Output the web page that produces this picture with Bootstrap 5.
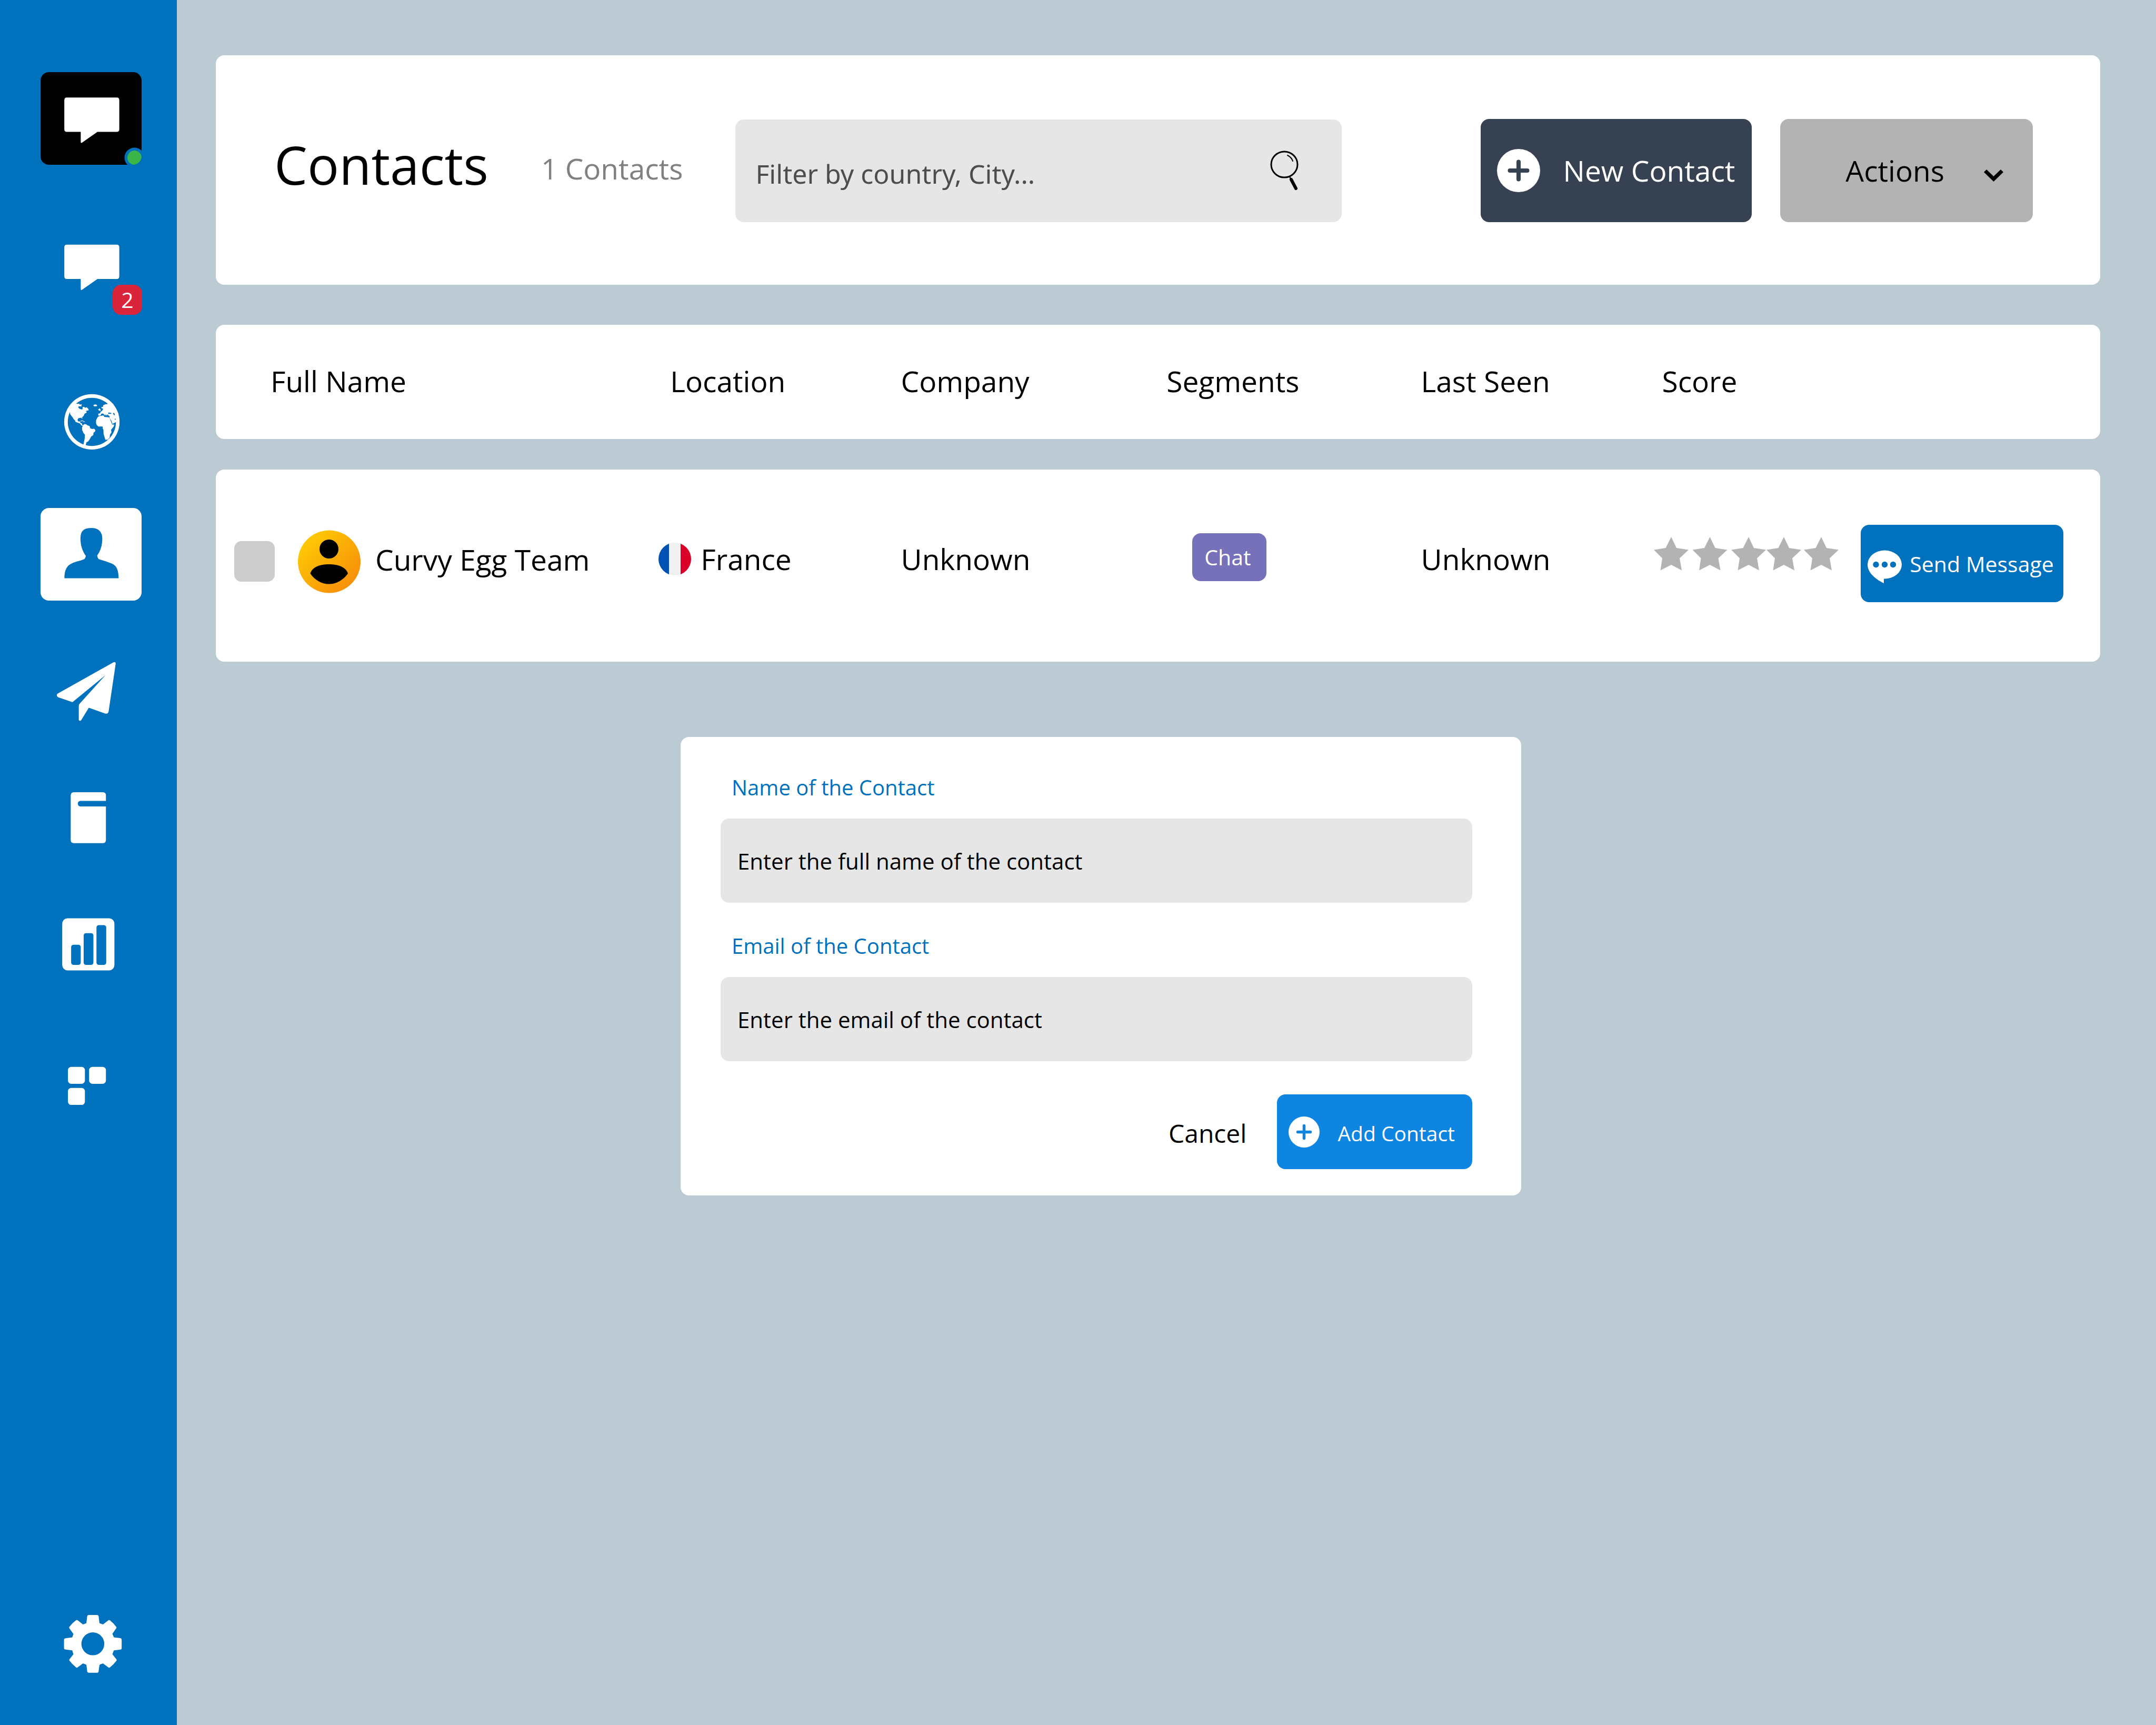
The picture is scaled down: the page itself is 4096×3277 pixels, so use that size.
<!DOCTYPE html>
<html lang="en">
<head>
<meta charset="utf-8">
<meta name="viewport" content="width=device-width, initial-scale=1">
<title>Contacts</title>
<link href="https://cdn.jsdelivr.net/npm/bootstrap@5.3.0/dist/css/bootstrap.min.css" rel="stylesheet">
<style>
  :root { --brand: #0071bc; --radius: 16px; }
  body { font-family: "Open Sans", "Noto Sans", sans-serif; font-size: 55px; line-height: 76px; color: #000; background: #bccad3; }
  svg { display: block; flex: none; }

  /* Sidebar */
  .side-rail { width: 336px; flex: none; background: var(--brand); padding: 137px 67px 66px 77px; }
  .rail-main { row-gap: 100px; }
  .rail-tools { row-gap: 64px; margin-top: 84px; }
  .rail-link { display: block; width: 192px; height: 176px; color: #fff; border-radius: var(--radius); }
  .rail-link svg { width: 192px; height: 176px; overflow: visible; fill: currentColor; }
  .rail-brand { background: #000; overflow: hidden; }
  .rail-link.current { background: #fff; color: var(--brand); }
  .unread-count { position: absolute; left: 137px; top: 128px; width: 56px; height: 57px; border-radius: var(--radius); background: #d9243a; color: #fff; font-size: 41px; line-height: 56px; text-align: center; }

  /* Page */
  .page-body { padding: 105px 106px 66px 74px; }
  .panel { background: #fff; border-radius: var(--radius); }
  .page-head { padding: 121px 128px 119px 111px; column-gap: 100px; }
  .page-title { font-size: 100px; line-height: 136px; font-weight: 400; padding-bottom: 24px; }
  .contact-count { color: #808080; padding-bottom: 8px; }
  .search-box { flex: 0 1 1152px; height: 195px; background: #e6e6e6; border-radius: var(--radius); padding-right: 82px; }
  .search-box input { font-family: "Noto Sans", sans-serif; font-size: 50px; line-height: 76px; padding: 12px 0 0 38px; background: none; border: 0; border-radius: var(--radius); height: 100%; color: #4d4d4d; }
  .search-box input::placeholder { color: #4d4d4d; opacity: 1; }
  .head-actions { column-gap: 54px; }
  .btn { --bs-btn-border-width: 0; --bs-btn-border-radius: 16px; display: inline-flex; align-items: center; padding: 0; font-size: inherit; line-height: inherit; white-space: nowrap; }
  .btn-new { --bs-btn-bg: #364152; --bs-btn-color: #fff; height: 196px; padding: 0 32px 0 31px; column-gap: 44px; }
  .btn-actions { --bs-btn-bg: #b3b3b3; --bs-btn-color: #000; height: 196px; padding: 0 56px 0 124px; column-gap: 75px; }

  /* Contacts table: every row is a panel of its own */
  .contact-table { table-layout: fixed; width: 100%; border-collapse: separate; border-spacing: 0 58px; margin-top: 18px; }
  .contact-table th, .contact-table td { background: #fff; padding: 0 0 0 2px; vertical-align: middle; }
  .contact-table th { height: 217px; font-weight: 400; padding-bottom: 4px; }
  .contact-table td { height: 365px; padding-bottom: 26px; }
  .contact-table tr > :first-child { border-radius: var(--radius) 0 0 var(--radius); }
  .contact-table tr > :last-child { border-radius: 0 var(--radius) var(--radius) 0; }
  .contact-table th.col-name { padding-left: 104px; }
  .contact-table th.col-place { padding-left: 22px; }
  .contact-table th.col-score { padding-left: 16px; }
  .contact-table td.cell-name { padding: 0 0 16px 35px; }
  .contact-table td.cell-place { padding-left: 0; }
  .contact-table td.cell-segment { padding: 0 0 32px 51px; }
  .contact-table td.cell-score { padding: 0 0 46px; }
  .contact-table td.cell-send { padding: 0 0 8px; }
  .row-check { width: 77px; height: 77px; flex: none; margin: 0 44px 0 0; background-color: #ccc; border: 0; border-radius: var(--radius); }
  .avatar { margin-right: 28px; }
  .cell-name label { padding-bottom: 8px; }
  .place { column-gap: 18px; }
  .segment-tag { display: inline-block; background: #7671b8; color: #fff; border-radius: var(--radius); font-size: 41px; line-height: 91px; padding: 0 29px 0 23px; vertical-align: middle; }
  .btn-send { --bs-btn-bg: var(--brand); --bs-btn-color: #fff; font-size: 41px; height: 147px; padding: 0 18px 0 13px; column-gap: 15px; }

  /* New contact form */
  .contact-form { width: 1597px; margin: 85px 0 0 883px; padding: 68px 93px 50px 76px; }
  .form-fields { row-gap: 54px; }
  .contact-form label { display: block; color: var(--brand); font-size: 40px; line-height: 56px; margin: 0 0 31px 21px; }
  .contact-form input { height: 160px; padding: 0 32px; border: 0; border-radius: var(--radius); background: #e6e6e6; font-size: 42px; color: #000; }
  .contact-form input::placeholder { color: #000; opacity: 1; }
  .form-foot { margin-top: 63px; column-gap: 58px; }
  .btn-cancel { --bs-btn-color: #000; font-size: 48px; padding-top: 6px; }
  .btn-add { --bs-btn-bg: #0d85e1; --bs-btn-color: #fff; font-size: 39px; height: 142px; padding: 0 33px 0 22px; column-gap: 34px; }
  .btn-add span { padding-top: 6px; }
</style>
</head>
<body class="d-flex min-vh-100">

<aside class="side-rail d-flex flex-column">
  <nav class="rail-main d-flex flex-column" aria-label="Main">
    <a class="rail-link rail-brand" href="#" aria-label="Profile">
      <svg viewBox="0 0 192 176" aria-hidden="true">
        <g transform="translate(-77 -60) scale(.26446 .35263)"><path d="M480 307H839Q857 307 857 322V478Q857 492 839 492H700L588 551Q580 554 580 546V492H480Q462 492 462 478V322Q462 307 480 307Z"/></g>
        <circle cx="178.500" cy="162.500" r="19" fill="#0071bc"/><path d="M178.500 162.500h19v19h-19z" fill="#0071bc"/><circle cx="178.500" cy="162.500" r="13.500" fill="#39b54a"/>
      </svg>
    </a>
    <a class="rail-link position-relative" href="#" aria-label="Conversations">
      <svg viewBox="0 0 192 176" aria-hidden="true"><g transform="translate(-77 -56.600) scale(.26446 .35263)"><path d="M480 307H839Q857 307 857 322V478Q857 492 839 492H700L588 551Q580 554 580 546V492H480Q462 492 462 478V322Q462 307 480 307Z"/></g></svg>
      <span class="unread-count">2</span>
    </a>
    <a class="rail-link" href="#" aria-label="Visitors">
      <svg viewBox="0 0 192 176" aria-hidden="true"><g transform="translate(-77 2.100) scale(.26446 .31342)">
        <path fill-rule="evenodd" d="M461 352a199 168 0 1 0 398 0a199 168 0 1 0-398 0ZM487 352a173 146 0 1 1 346 0a173 146 0 1 1-346 0Z"/>
        <path d="M492 262L540 246L548 241L560 243L570 241L572 248L588 245L584 253L587 258L566 258L561 264L572 273L590 277L594 272L593 262L605 261L612 267L622 264L632 270L638 281L628 284L614 287L624 291L620 297L608 302L600 317L591 323L591 335L584 327L565 329L557 338L560 348L570 350L576 348L576 357L588 361L590 370L597 374L592 376L583 372L575 362L543 352L538 342L530 336L522 325L508 310L503 303L502 290L485 320Z"/>
        <path d="M597 371L608 365L620 367L630 374L643 377L649 391L664 395L675 393L684 400L684 410L672 418L670 432L655 441L645 457L634 470L622 475L617 488L619 503L597 500L604 470L608 455L610 430L600 420L590 402L590 385Z"/>
        <path d="M574 348Q590 339 602 347L588 348ZM592 352L603 348L615 352Z"/>
        <rect x="672" y="247" width="25" height="11" rx="8"/>
        <path d="M704 280L715 269L724 280L722 286L712 283Z"/>
        <path fill-rule="evenodd" d="M707 302L720 300L722 292L733 285L742 273L727 268L730 262L742 260L740 252L755 246L778 243L810 240L850 300L850 350L832 354L808 364L800 345L785 326L788 318L768 307L768 315L757 307L757 315L740 301L728 303L722 313L710 315L705 309ZM778 295L800 298L798 304L787 302L780 307ZM812 298L832 300V309L824 310L821 312L812 303ZM822 335L831 332V341Z"/>
        <path d="M710 318L738 313L747 315L748 322L782 324L790 334L803 363L808 369L821 367L817 380L798 400L801 415L790 430L788 446L774 460L757 461L744 425L743 400L738 392L737 380L707 380L695 371L690 360V343L700 325Z"/>
      </g></svg>
    </a>
    <a class="rail-link current" href="#" aria-label="Contacts" aria-current="page">
      <svg viewBox="0 0 192 176" aria-hidden="true"><g transform="translate(-77 -273.900) scale(.26446 .31342)"><path d="M463 1300C463 1235 490 1215 545 1200Q590 1190 605 1184Q614 1178 617 1165C590 1135 578 1095 578 1060C578 1010 605 995 657 995C710 995 735 1020 735 1060C735 1100 722 1135 698 1162Q701 1178 710 1184Q760 1196 800 1210C840 1222 852 1255 852 1300Z"/></g></svg>
    </a>
  </nav>
  <nav class="rail-tools d-flex flex-column" aria-label="Tools">
    <a class="rail-link" href="#" aria-label="Campaigns">
      <svg viewBox="0 0 192 176" aria-hidden="true"><g transform="translate(-77 -27.100) scale(.26446 .29387)"><path d="M815 205Q832 200 831 215L780 524Q776 540 755 536L638 499L583 580Q575 588 566 579V484Q567 477 575 470L757 289L527 458Q521 464 513 461L417 431Q402 420 412 409Z"/></g></svg>
    </a>
    <a class="rail-link" href="#" aria-label="Helpdesk">
      <svg viewBox="0 0 192 176" aria-hidden="true"><g transform="translate(-77 -267.100) scale(.26446 .29387)"><path d="M530 1045H739Q761 1047 761 1064V1101H577Q559 1103 559 1119Q560 1135 577 1137H761V1356Q758 1374 739 1374H530Q509 1373 508 1356V1064Q510 1046 530 1045Z"/></g></svg>
    </a>
    <a class="rail-link" href="#" aria-label="Analytics">
      <svg viewBox="0 0 192 176" aria-hidden="true"><g transform="translate(-77 -46.300) scale(.26446 .31342)"><rect x="447" y="274" width="375" height="316" rx="38" ry="33"/><g fill="#0071bc"><rect x="511" y="434" width="69" height="122" rx="17" ry="14"/><rect x="601" y="364" width="70" height="192" rx="17" ry="14"/><rect x="693" y="315" width="70" height="241" rx="17" ry="14"/></g></g></svg>
    </a>
    <a class="rail-link" href="#" aria-label="Plugins">
      <svg viewBox="0 0 192 176" aria-hidden="true"><g transform="translate(-77 -286.300) scale(.26446 .31342)"><rect x="488" y="1174" width="122" height="103" rx="24" ry="20"/><rect x="640" y="1174" width="121" height="103" rx="24" ry="20"/><rect x="488" y="1302" width="122" height="103" rx="24" ry="20"/></g></svg>
    </a>
  </nav>
  <a class="rail-link mt-auto" href="#" aria-label="Settings">
    <svg viewBox="0 0 192 176" aria-hidden="true"><g transform="translate(-30.900 -40.200) scale(.25597)"><path fill-rule="evenodd" d="M477 286H542Q551 286 552 296L558 347L584 356L624 326Q630 321 636 326Q665 348 684 376Q686 381 682 386L654 426L665 452L714 458Q723 460 723 469V533Q723 542 714 543L665 549L654 577L684 615Q688 620 684 626Q662 655 635 676Q629 679 624 675L584 645L562 653L558 658L552 703Q550 715 541 715H477Q469 714 467 705L461 655L436 645L396 675Q390 679 384 675Q356 653 335 624Q332 619 336 614L365 577L356 549L304 542Q295 540 295 532V469Q296 460 306 459L356 452L365 427L335 386Q331 380 334 375Q356 346 384 325Q390 321 396 325L436 356L461 347L467 296Q468 287 477 286ZM424 500a85 85 0 1 0 170 0a85 85 0 1 0-170 0Z"/></g></svg>
  </a>
</aside>

<main class="page-body flex-grow-1">
  <header class="page-head panel d-flex align-items-center">
    <h1 class="page-title m-0">Contacts</h1>
    <span class="contact-count">1 Contacts</span>
    <form class="search-box d-flex align-items-center" role="search">
      <input class="form-control shadow-none" type="search" placeholder="Filter by country, City..." aria-label="Filter contacts">
      <svg width="54" height="76" viewBox="0 0 54 76" fill="none" stroke="#000" stroke-linecap="round" aria-hidden="true"><ellipse cx="27" cy="26.500" rx="25" ry="24.500" stroke-width="3"/><path d="M33 9Q41 13 43 20" stroke-width="2"/><path d="M37 49L40 56" stroke-width="2"/><path d="M40 55L49 72" stroke-width="6"/></svg>
    </form>
    <div class="head-actions d-flex ms-auto">
      <button class="btn btn-new" type="button">
        <svg width="82" height="82" viewBox="0 0 82 82" aria-hidden="true"><circle cx="41" cy="41" r="41" fill="#fff"/><path d="M41 24.500v33M24.500 41h33" stroke="#364152" stroke-width="8" stroke-linecap="round"/></svg>
        New Contact
      </button>
      <button class="btn btn-actions" type="button" aria-haspopup="true">
        Actions
        <svg width="37" height="42" viewBox="0 0 37 42" aria-hidden="true"><path d="M0 24L5 19L18.500 32L32 19L37 24L18.500 42Z"/></svg>
      </button>
    </div>
  </header>

  <table class="contact-table">
    <colgroup>
      <col style="width:23.5%"><col style="width:12.8%"><col style="width:14.1%"><col style="width:13.5%"><col style="width:12.4%"><col style="width:11%"><col style="width:12.7%">
    </colgroup>
    <thead>
      <tr>
        <th class="col-name" scope="col">Full Name</th>
        <th class="col-place" scope="col">Location</th>
        <th scope="col">Company</th>
        <th scope="col">Segments</th>
        <th scope="col">Last Seen</th>
        <th class="col-score" scope="col">Score</th>
        <th></th>
      </tr>
    </thead>
    <tbody>
      <tr>
        <td class="cell-name">
          <div class="d-flex align-items-center">
            <input class="form-check-input row-check" type="checkbox" id="pick-1">
            <svg class="avatar" width="119" height="120" viewBox="0 0 119 120" aria-hidden="true">
              <defs><linearGradient id="egg" x1="15%" y1="15%" x2="85%" y2="85%"><stop offset="0" stop-color="#fec804"/><stop offset="1" stop-color="#f79009"/></linearGradient></defs>
              <circle cx="59.500" cy="60" r="59.500" fill="url(#egg)"/><circle cx="59" cy="36" r="18"/><path d="M23.500 82.500C27 70 42 65 59 65S91 70 95 82.500C86 95 73 102.500 59 102.500S32 95 23.500 82.500Z"/>
            </svg>
            <label for="pick-1">Curvy Egg Team</label>
          </div>
        </td>
        <td class="cell-place">
          <div class="place d-flex align-items-center">
            <svg width="62" height="62" viewBox="0 0 62 62" aria-hidden="true"><defs><clipPath id="disc"><circle cx="31" cy="31" r="31"/></clipPath></defs><g clip-path="url(#disc)"><path fill="#f0f0f0" d="M0 0h62v62H0z"/><path fill="#0052b4" d="M0 0h20v62H0z"/><path fill="#d80027" d="M42 0h20v62H42z"/></g></svg>
            France
          </div>
        </td>
        <td>Unknown</td>
        <td class="cell-segment"><span class="segment-tag">Chat</span></td>
        <td>Unknown</td>
        <td class="cell-score">
          <svg width="351" height="64" viewBox="0 0 351 64" fill="#b3b3b3" role="img" aria-label="No score">
            <defs><path id="star" d="M33 0L43 21L66 24.500L49 40.500L53 63.500L33 53L12.500 63.500L16 40.500L0 24.500L22.500 21Z"/></defs>
            <use href="#star"/><use href="#star" x="73.500"/><use href="#star" x="147"/><use href="#star" x="214"/><use href="#star" x="285"/>
          </svg>
        </td>
        <td class="cell-send">
          <button class="btn btn-send" type="button">
            <svg width="65" height="74" viewBox="0 0 65 74" aria-hidden="true"><path fill="#fff" d="M0 38.500A32.500 27 0 1 1 32 65.500H31V74C12 65 0 52 0 38.500Z"/><g fill="#0071bc"><circle cx="16" cy="38.500" r="5.700"/><circle cx="32.500" cy="38.500" r="5.700"/><circle cx="48.500" cy="38.500" r="5.700"/></g></svg>
            Send Message
          </button>
        </td>
      </tr>
    </tbody>
  </table>

  <form class="contact-form panel">
    <div class="form-fields d-flex flex-column">
      <div>
        <label for="contact-name">Name of the Contact</label>
        <input class="form-control shadow-none" type="text" id="contact-name" placeholder="Enter the full name of the contact">
      </div>
      <div>
        <label for="contact-email">Email of the Contact</label>
        <input class="form-control shadow-none" type="email" id="contact-email" placeholder="Enter the email of the contact">
      </div>
    </div>
    <div class="form-foot d-flex justify-content-end align-items-center">
      <button class="btn btn-cancel" type="button">Cancel</button>
      <button class="btn btn-add" type="button">
        <svg width="59" height="59" viewBox="0 0 59 59" aria-hidden="true"><circle cx="29.500" cy="29.500" r="29.500" fill="#fff"/><path d="M29.500 17.500v24M17.500 29.500h24" stroke="#0d85e1" stroke-width="5.500" stroke-linecap="round"/></svg>
        <span>Add Contact</span>
      </button>
    </div>
  </form>
</main>

<script src="https://cdn.jsdelivr.net/npm/bootstrap@5.3.0/dist/js/bootstrap.bundle.min.js"></script>
</body>
</html>
